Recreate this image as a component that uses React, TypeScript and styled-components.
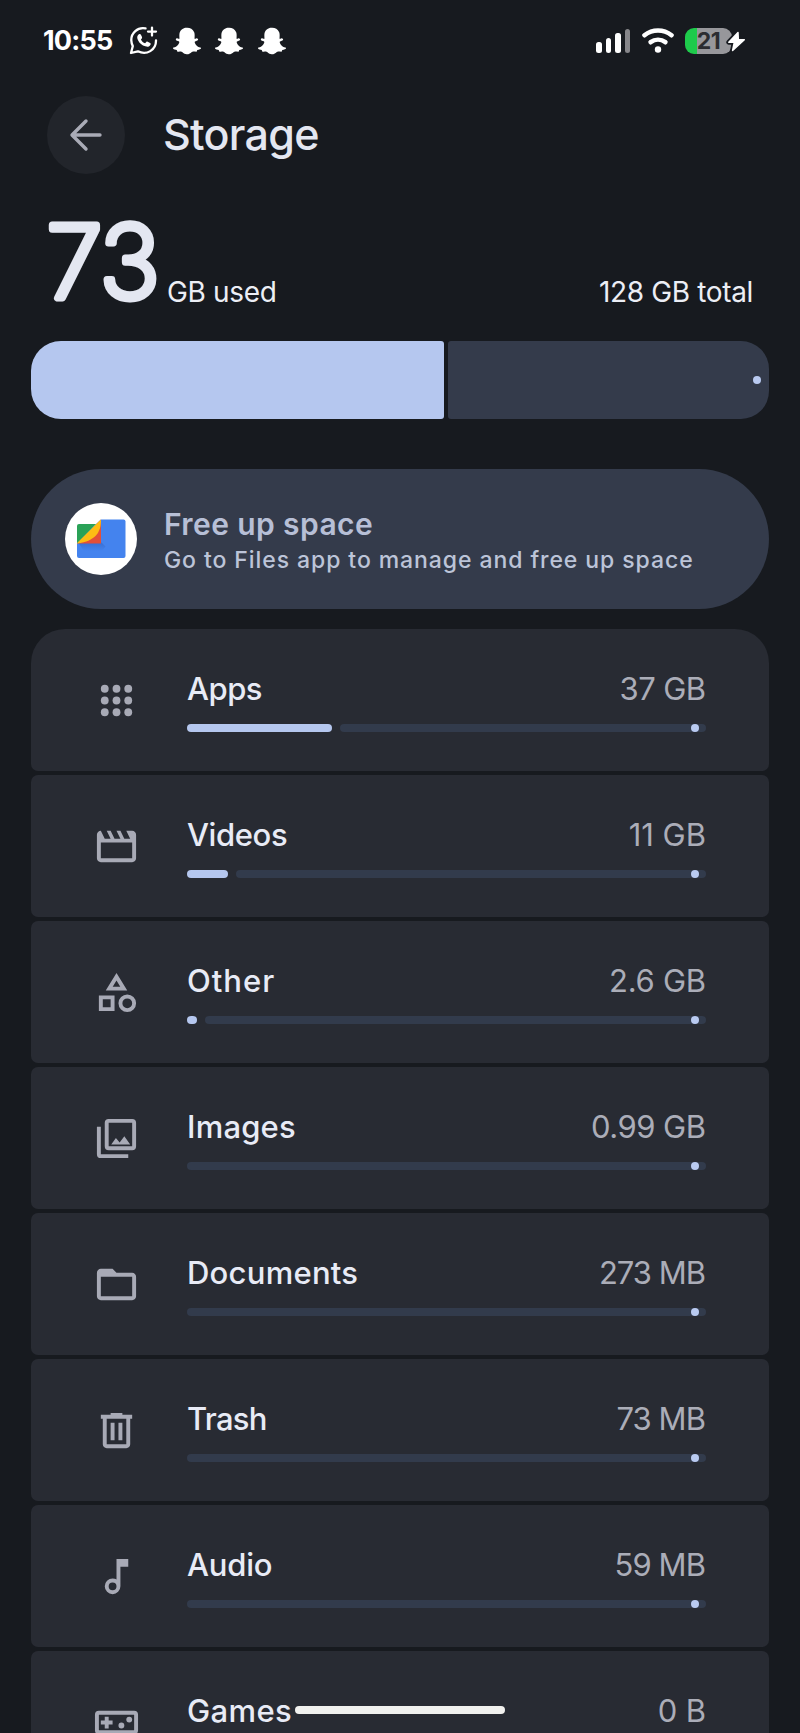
import React from "react";
import styled, { createGlobalStyle } from "styled-components";
import { FaSnapchatGhost } from "react-icons/fa";

const GlobalStyle = createGlobalStyle`
  * { box-sizing: border-box; }
  body {
    margin: 0;
    background: #171a1f;
    font-family: Inter, "Liberation Sans", sans-serif;
  }
`;

const Screen = styled.div`
  position: relative;
  display: flex;
  flex-direction: column;
  width: 800px;
  height: 1733px;
  overflow: hidden;
  padding: 0 31px;
  background: #171a1f;
  color: #e4e7f1;

  > * { flex-shrink: 0; }
`;

/* ---------- status bar ---------- */

const StatusBar = styled.div`
  display: flex;
  justify-content: space-between;
  align-items: center;
  height: 81px;
  padding: 0 23px 0 12px;
  color: #fff;
`;

const StatusGroup = styled.div`
  display: flex;
  align-items: center;
`;

const Clock = styled.span`
  width: 86px;
  font-size: 27px;
  line-height: 30px;
  font-weight: 700;
  letter-spacing: -0.8px;
`;

const Notifications = styled.div`
  display: flex;
  align-items: center;
  gap: 14.5px;

  svg { display: block; }
  svg + svg { width: 28px; height: 28px; }
`;

const SignalBars = styled.div`
  display: flex;
  align-items: flex-end;
  gap: 4px;
  width: 35px;
  height: 24px;
`;

const SignalBar = styled.span<{ $height: number; $off?: boolean }>`
  width: 5.5px;
  height: ${(p) => p.$height}px;
  border-radius: 2.5px;
  background: ${(p) => (p.$off ? "#86868a" : "#fff")};
`;

const WifiSvg = styled.svg`
  display: block;
  margin: 0 11px;
`;

const Battery = styled.div`
  position: relative;
  display: flex;
  align-items: center;
  justify-content: center;
  width: 47px;
  height: 26px;
  margin-right: 14px;
  border-radius: 9px;
  background: linear-gradient(90deg, #1ecb4b 0 12px, #97979b 12px);
  color: #2b2c30;
  font-size: 23px;
  line-height: 26px;
  font-weight: 700;
  letter-spacing: -0.5px;
`;

const ChargeBolt = styled.svg`
  position: absolute;
  left: 40px;
  top: 1px;
`;

/* ---------- header ---------- */

const Header = styled.header`
  display: flex;
  align-items: center;
  gap: 38px;
  height: 78px;
  margin-top: 15px;
  padding-left: 16px;
`;

const BackButton = styled.button`
  display: flex;
  align-items: center;
  justify-content: center;
  width: 78px;
  height: 78px;
  padding: 0;
  border: 0;
  border-radius: 50%;
  background: #22252b;
`;

const Title = styled.h1`
  margin: -2px 0 0;
  font-size: 43px;
  line-height: 52px;
  font-weight: 450;
  letter-spacing: -0.7px;
`;

/* ---------- usage summary ---------- */

const Summary = styled.div`
  display: flex;
  justify-content: space-between;
  align-items: flex-end;
  height: 167px;
  padding: 0 16px 24px 14px;
`;

const Used = styled.div`
  display: flex;
  align-items: flex-end;
`;

const BigNumber = styled.svg`
  display: block;
  overflow: visible;
  width: 122px;
  height: 110px;

  text {
    font-size: 101px;
    font-weight: 200;
    letter-spacing: -1px;
    fill: #e4e7f1;
    stroke: #e4e7f1;
    stroke-width: 7px;
    stroke-linejoin: round;
  }
`;

const Caption = styled.span`
  font-size: 28px;
  line-height: 34px;
  margin-bottom: 8px;
  letter-spacing: -0.35px;
  color: #eceef5;
`;

const UsageBar = styled.div`
  display: flex;
  gap: 4px;
  height: 78px;
`;

const UsageFill = styled.div`
  width: 413px;
  border-radius: 30px 3px 3px 30px;
  background: #b5c7ef;
`;

const UsageRest = styled.div`
  display: flex;
  flex: 1;
  align-items: center;
  justify-content: flex-end;
  padding-right: 8px;
  border-radius: 3px 28px 28px 3px;
  background: #343b4b;
`;

const Dot = styled.span`
  width: 8px;
  height: 8px;
  border-radius: 50%;
  background: #b9caf1;
`;

/* ---------- free up space ---------- */

const FreeUpCard = styled.a`
  display: flex;
  align-items: center;
  gap: 27px;
  height: 140px;
  margin-top: 50px;
  padding-left: 34px;
  border-radius: 70px;
  background: #343b4b;
`;

const LogoDisc = styled.span`
  display: flex;
  align-items: center;
  justify-content: center;
  width: 72px;
  height: 72px;
  border-radius: 50%;
  background: #fff;
`;

const FreeUpText = styled.div`
  display: flex;
  flex-direction: column;
  padding-top: 4px;
  white-space: nowrap;
`;

const FreeUpTitle = styled.span`
  font-size: 30px;
  line-height: 38px;
  font-weight: 600;
  letter-spacing: 0.4px;
  color: #b7bfd6;
`;

const FreeUpSubtitle = styled.span`
  font-size: 23px;
  line-height: 34px;
  font-weight: 500;
  letter-spacing: 0.92px;
  color: #bcc4d8;
`;

/* ---------- categories ---------- */

const CategoryList = styled.ul`
  display: flex;
  flex-direction: column;
  gap: 4px;
  margin: 20px 0 0;
  padding: 0;
  list-style: none;
`;

const CategoryCard = styled.li`
  display: flex;
  flex: none;
  align-items: center;
  height: 142.06px;
  padding: 0 63px 0 62px;
  border-radius: 7px;
  background: #282b33;

  &:first-child { border-radius: 34px 34px 7px 7px; }
`;

const CategoryIcon = styled.svg`
  display: block;
  flex: none;
  width: 47px;
  height: 47px;
  margin-right: 47px;
  fill: #a8aab6;
`;

const CategoryBody = styled.div`
  display: flex;
  flex: 1;
  flex-direction: column;
  gap: 17px;
  padding-top: 3px;
`;

const CategoryLine = styled.div`
  display: flex;
  justify-content: space-between;
  line-height: 36px;
  font-size: 31px;
`;

const Label = styled.span<{ $tracking: number }>`
  font-weight: 450;
  letter-spacing: ${(p) => p.$tracking}px;
  color: #e8ebf6;
`;

const Size = styled.span<{ $tracking: number }>`
  letter-spacing: ${(p) => p.$tracking}px;
  margin-right: ${(p) => -p.$tracking}px;
  color: #abadb8;
`;

const Meter = styled.div`
  display: flex;
  gap: 8px;
  height: 8px;
`;

const MeterFill = styled.div<{ $width: number }>`
  width: ${(p) => p.$width}px;
  border-radius: 4px;
  background: #b5c7ef;
`;

const MeterRest = styled.div`
  display: flex;
  flex: 1;
  justify-content: flex-end;
  padding-right: 7px;
  border-radius: 4px;
  background: #323b4c;
`;

const HomeIndicator = styled.div`
  position: absolute;
  left: 295px;
  bottom: 19px;
  width: 210px;
  height: 8px;
  border-radius: 4px;
  background: #f1f1ef;
`;

type Category = {
  name: string;
  tracking: number;
  size: string;
  sizeTracking: number;
  fill: number;
  icon: React.ReactNode;
};

const categories: Category[] = [
  {
    name: "Apps", tracking: -0.5, size: "37 GB", sizeTracking: -0.6, fill: 145,
    icon: [6, 12, 18].map((y) => [6, 12, 18].map((x) => <circle key={`${x}-${y}`} cx={x} cy={y} r="2" />)),
  },
  {
    name: "Videos", tracking: -0.4, size: "11 GB", sizeTracking: 0, fill: 41,
    icon: <path d="M4 4l2 4h3L7 4h2l2 4h3l-2-4h2l2 4h3l-2-4h3q.825 0 1.413.587T22 6v12q0 .825-.587 1.413T20 20H4q-.825 0-1.413-.587T2 18V6q0-.825.587-1.413T4 4Zm0 6v8h16v-8H4Z" />,
  },
  {
    name: "Other", tracking: 1, size: "2.6 GB", sizeTracking: -0.3, fill: 10,
    icon: <path fillRule="evenodd" d="M12 2l-5.5 9h11L12 2zm0 3.84L13.93 9h-3.87L12 5.84zM17.5 13a4.5 4.5 0 1 0 0 9 4.5 4.5 0 0 0 0-9zm0 7a2.5 2.5 0 1 1 0-5 2.5 2.5 0 0 1 0 5zM3 21.5h8v-8H3v8zm2-6h4v4H5v-4z" />,
  },
  {
    name: "Images", tracking: 0.2, size: "0.99 GB", sizeTracking: -0.5, fill: 0,
    icon: <path fillRule="evenodd" d="M8 2h12a2 2 0 0 1 2 2v12a2 2 0 0 1-2 2H8a2 2 0 0 1-2-2V4a2 2 0 0 1 2-2zm0 2v12h12V4H8zm1.3 11l2.4-3.2 1.9 2.3 2.4-3.3 3 4.2H9.3zM2 6h2v14h14v2H4a2 2 0 0 1-2-2V6z" />,
  },
  {
    name: "Documents", tracking: 0.25, size: "273 MB", sizeTracking: -1, fill: 0,
    icon: <path fillRule="evenodd" d="M4 20q-.825 0-1.412-.587T2 18V6q0-.825.588-1.412T4 4h6l2 2h8q.825 0 1.413.588T22 8v10q0 .825-.587 1.413T20 20H4Zm0-2h16V8H4v10Z" />,
  },
  {
    name: "Trash", tracking: -0.7, size: "73 MB", sizeTracking: -0.9, fill: 0,
    icon: <path fillRule="evenodd" d="M7 21q-.825 0-1.412-.587T5 19V6H4V4h5V3h6v1h5v2h-1v13q0 .825-.587 1.413T17 21H7ZM17 6H7v13h10V6ZM9 17h2V8H9v9Zm4 0h2V8h-2v9Z" />,
  },
  {
    name: "Audio", tracking: -0.2, size: "59 MB", sizeTracking: -0.9, fill: 0,
    icon: <path fillRule="evenodd" d="M10 21q-1.65 0-2.825-1.175T6 17t1.175-2.825T10 13q.575 0 1.063.137T12 13.55V3h6v4h-4v10q0 1.65-1.175 2.825T10 21Zm0-2a2 2 0 1 0 0-4 2 2 0 0 0 0 4Z" />,
  },
  {
    name: "Games", tracking: 0.4, size: "0 B", sizeTracking: -0.2, fill: 0,
    icon: <path fillRule="evenodd" d="M3 6h18a2 2 0 0 1 2 2v8a2 2 0 0 1-2 2H3a2 2 0 0 1-2-2V8a2 2 0 0 1 2-2zm0 2v8h18V8H3zm3 7h2v-2h2v-2H8V9H6v2H4v2h2v2zm8.5 0a1.5 1.5 0 1 0 0-3 1.5 1.5 0 0 0 0 3zm4-3a1.5 1.5 0 1 0 0-3 1.5 1.5 0 0 0 0 3z" />,
  },
];

function WhatsAppStatusIcon() {
  return (
    <svg width="29" height="29" viewBox="0 0 29 29" fill="none" stroke="#fff" strokeWidth="2.3" strokeLinecap="round" strokeLinejoin="round">
      <path d="M16.5 2.4C8.5 .8 2 7.2 2.3 14.4c.1 2.2.6 4 1.5 5.7L2 27l6.9-1.7C17.5 29.6 27.3 24.2 27 14.3" />
      <path d="M23 1.6v8M19 5.6h8" />
      <path d="M9.9 8.2c.6-.5 1.5-.4 1.9.3l1.2 2.5c.2.5.1 1-.2 1.4l-.9 1c.9 1.9 2.4 3.2 4.2 3.9l1.200-1.300c.4-.4.8-.5 1.300-.3l2.500 1.200c.6.3.8.9.5 1.500-.8 1.900-2.600 2.700-4.400 2.200-4.500-1.200-7.900-4.300-8.900-8.400-.3-1.600.3-3 1.600-4z" fill="#fff" stroke="none" />
    </svg>
  );
}

function WifiIcon() {
  return (
    <WifiSvg width="32" height="25" viewBox="0 0 32 25" fill="none" stroke="#fff" strokeWidth="4.6" strokeLinecap="round">
      <path d="M2.5 7.2C10.5 1 21.5 1 29.5 7.2" />
      <path d="M8.6 14.2C13 10.9 19 10.9 23.4 14.2" />
      <circle cx="16" cy="21.5" r="3.2" fill="#fff" stroke="none" />
    </WifiSvg>
  );
}

function FilesLogo() {
  return (
    <svg width="50" height="42" viewBox="0 0 50 42">
      <defs>
        <linearGradient id="fold" x1="0" y1="0" x2="0" y2="1">
          <stop offset="0" stopColor="#2f62c4" />
          <stop offset="1" stopColor="#4483ee" />
        </linearGradient>
      </defs>
      <path d="M25 1.5h22.500a2 2 0 0 1 2 2V38a2 2 0 0 1-2 2H3a2 2 0 0 1-2-2V24z" fill="#4483ee" />
      <path d="M2 24.5h23.500l4 4L26 33H8z" fill="url(#fold)" opacity=".6" />
      <path d="M25 1.5V25.5H1z" fill="#e34f39" />
      <path d="M25 1.5C25 14 20 23 1 25.5L1.500 24z" fill="#fdbd14" />
      <path d="M1 25L20 6H3a2 2 0 0 0-2 2z" fill="#2aa257" />
    </svg>
  );
}

export default function App() {
  return (
    <>
      <GlobalStyle />
      <Screen>
        <StatusBar>
          <StatusGroup>
            <Clock>10:55</Clock>
            <Notifications>
              <WhatsAppStatusIcon />
              <FaSnapchatGhost />
              <FaSnapchatGhost />
              <FaSnapchatGhost />
            </Notifications>
          </StatusGroup>
          <StatusGroup>
            <SignalBars>
              <SignalBar $height={11} />
              <SignalBar $height={15} />
              <SignalBar $height={20} />
              <SignalBar $height={24} $off />
            </SignalBars>
            <WifiIcon />
            <Battery>
              21
              <ChargeBolt width="22" height="25" viewBox="0 0 22 25">
                <path
                  d="M13 3.5L3.8 13.3h5.5L7.6 21.5 19.3 10.8h-6z"
                  fill="#fff"
                  stroke="#171a1f"
                  strokeWidth="5"
                  strokeLinejoin="round"
                />
                <path d="M13 3.5L3.8 13.3h5.5L7.6 21.5 19.3 10.8h-6z" fill="#fff" stroke="#fff" strokeWidth="1.5" strokeLinejoin="round" />
              </ChargeBolt>
            </Battery>
          </StatusGroup>
        </StatusBar>

        <Header>
          <BackButton aria-label="Back">
            <svg width="34" height="34" viewBox="0 0 34 34" fill="none" stroke="#a9abb6" strokeWidth="3.4" strokeLinecap="round" strokeLinejoin="round">
              <path d="M31 17H3.5M17 3L3 17L17 31" />
            </svg>
          </BackButton>
          <Title>Storage</Title>
        </Header>

        <Summary>
          <Used>
            <BigNumber>
              <text x="1.5" y="91">73</text>
            </BigNumber>
            <Caption>GB used</Caption>
          </Used>
          <Caption>128 GB total</Caption>
        </Summary>

        <UsageBar>
          <UsageFill />
          <UsageRest>
            <Dot />
          </UsageRest>
        </UsageBar>

        <FreeUpCard>
          <LogoDisc>
            <FilesLogo />
          </LogoDisc>
          <FreeUpText>
            <FreeUpTitle>Free up space</FreeUpTitle>
            <FreeUpSubtitle>Go to Files app to manage and free up space</FreeUpSubtitle>
          </FreeUpText>
        </FreeUpCard>

        <CategoryList>
          {categories.map((c) => (
            <CategoryCard key={c.name}>
              <CategoryIcon viewBox="0 0 24 24">{c.icon}</CategoryIcon>
              <CategoryBody>
                <CategoryLine>
                  <Label $tracking={c.tracking}>{c.name}</Label>
                  <Size $tracking={c.sizeTracking}>{c.size}</Size>
                </CategoryLine>
                <Meter>
                  {c.fill > 0 && <MeterFill $width={c.fill} />}
                  <MeterRest>
                    <Dot />
                  </MeterRest>
                </Meter>
              </CategoryBody>
            </CategoryCard>
          ))}
        </CategoryList>

        <HomeIndicator />
      </Screen>
    </>
  );
}
